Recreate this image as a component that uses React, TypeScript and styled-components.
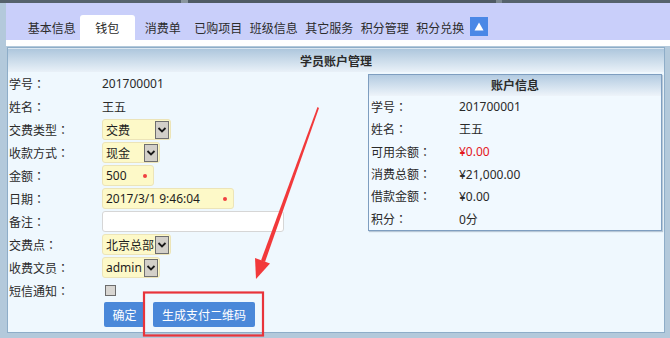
import React from "react";
import styled, { createGlobalStyle } from "styled-components";

const Global = createGlobalStyle`
  html, body { margin: 0; padding: 0; background: #b3c9db; }
  body { font-family: "Noto Sans", "Noto Sans CJK SC", sans-serif; font-size: 12px; color: #2a2a2a; }
  * { box-sizing: border-box; }
`;

const Root = styled.div`
  position: relative;
  width: 670px;
  height: 338px;
  overflow: hidden;
  background: #b3c9db;
  display: flex;
  flex-direction: column;
`;

const TopStrip = styled.div`
  height: 3px;
  background: linear-gradient(90deg, #55626c 0 27%, #8a969e 27% 28%, #4f5b64 28% 74%, #7c8890 74% 75%, #56636c 75%);
`;

const TabBar = styled.div`
  margin-left: 6px;
  height: 37px;
  background: #c9cffa;
  display: flex;
  align-items: flex-end;
  padding-left: 18px;
`;

const Tab = styled.div<{ $active?: boolean }>`
  width: 55.5px;
  height: 25px;
  display: flex;
  align-items: center;
  justify-content: center;
  font-size: 12px;
  color: #2c2c2c;
  background: ${(p) => (p.$active ? "#ffffff" : "transparent")};
  border-radius: 3px 3px 0 0;
  white-space: nowrap;
`;

const UpBox = styled.div`
  width: 18px;
  height: 19px;
  margin: 0 0 4px 2px;
  background: #4a88e6;
  display: flex;
  align-items: center;
  justify-content: center;
`;

const WhiteStrip = styled.div`
  margin-left: 6px;
  height: 6px;
  background: #ffffff;
`;

const Panel = styled.div`
  margin: 1px 5px 0 7px;
  height: 286px;
  border: 1px solid #8eadc8;
  background: #eff8fe;
  display: flex;
  flex-direction: column;
`;

const PanelHeader = styled.div`
  height: 24px;
  display: flex;
  align-items: center;
  justify-content: center;
  font-weight: bold;
  font-size: 12px;
  color: #2a2a2a;
  background: linear-gradient(#aec7dd, #e9f1f8);
  border-top: 1px solid #dbe7f1;
`;

const PanelBody = styled.div`
  flex: 1;
  display: flex;
  padding-left: 1px;
`;

const Form = styled.div`
  width: 359px;
  display: grid;
  grid-template-columns: 93px 1fr;
  grid-auto-rows: 23px;
  align-items: center;
`;

const LabelText = styled.div`
  font-size: 12px;
  color: #2a2a2a;
  white-space: nowrap;
`;

const Colon = styled.span`
  font-family: "Noto Sans CJK TC", "Noto Sans CJK SC", sans-serif;
`;

const Label = ({ children }: { children: string }) => (
  <LabelText>
    {children}
    <Colon>：</Colon>
  </LabelText>
);

const Value = styled.div`
  font-size: 12px;
  color: #2a2a2a;
  white-space: nowrap;
`;

const Field = styled.div<{ $w: number; $white?: boolean }>`
  position: relative;
  width: ${(p) => p.$w}px;
  height: 21px;
  display: flex;
  align-items: center;
  padding-left: 3px;
  font-size: 12px;
  color: #1e1e1e;
  background: ${(p) => (p.$white ? "#ffffff" : "#fdf9c8")};
  border: 1px solid ${(p) => (p.$white ? "#d6d6d6" : "#ece4b8")};
  border-radius: 3px;
  white-space: nowrap;
`;

const Star = styled.span`
  position: absolute;
  right: 6px;
  top: 8px;
  width: 4px;
  height: 4px;
  border-radius: 50%;
  background: #f04040;
`;

const DropBtn = styled.span`
  margin-left: auto;
  margin-right: 1px;
  width: 14px;
  height: 18px;
  background: #d3d0c9;
  border: 1px solid #6f6f6f;
  display: flex;
  align-items: center;
  justify-content: center;
`;

const CheckCell = styled.div`
  display: flex;
  align-items: center;
  padding-left: 3px;
`;

const Check = styled.span`
  display: block;
  width: 11px;
  height: 11px;
  border: 1px solid #6c6c6c;
  background: #d8d6d2;
`;

const ButtonRow = styled.div`
  grid-column: 2;
  height: 27px;
  display: flex;
  gap: 8px;
  padding-left: 2px;
  align-self: start;
`;

const Btn = styled.button<{ $w: number }>`
  width: ${(p) => p.$w}px;
  height: 25px;
  border: none;
  border-radius: 2px;
  background: #4a88d9;
  color: #ffffff;
  font-family: "Noto Sans CJK SC", sans-serif;
  font-size: 12px;
  padding: 0;
`;

const InfoBox = styled.div`
  margin-top: 2px;
  width: 294px;
  height: 157px;
  border: 1px solid #7e9ec0;
  background: #f1f9ff;
  box-shadow: 1px 1px 1px rgba(80, 110, 140, 0.35);
  align-self: flex-start;
  display: flex;
  flex-direction: column;
`;

const InfoHeader = styled.div`
  height: 22px;
  display: flex;
  align-items: center;
  justify-content: center;
  font-weight: bold;
  font-size: 12px;
  background: linear-gradient(#b3cbe1, #eef4fa);
`;

const InfoGrid = styled.div`
  display: grid;
  grid-template-columns: 88px 1fr;
  grid-auto-rows: 22.4px;
  align-items: center;
  padding-left: 2px;
`;

const Money = styled.div<{ $red?: boolean }>`
  font-size: 12px;
  color: ${(p) => (p.$red ? "#e4161c" : "#2a2a2a")};
`;

const Overlay = styled.svg`
  position: absolute;
  left: 0;
  top: 0;
  pointer-events: none;
`;

const Chevron = () => (
  <svg width="10" height="8" viewBox="0 0 10 8">
    <path d="M1.5 2 L5 5.5 L8.5 2" fill="none" stroke="#1a1a1a" strokeWidth="1.8" />
  </svg>
);

const tabs = ["基本信息", "钱包", "消费单", "已购项目", "班级信息", "其它服务", "积分管理", "积分兑换"];

const info: [string, string, boolean?][] = [
  ["学号", "201700001"],
  ["姓名", "王五"],
  ["可用余额", "¥0.00", true],
  ["消费总额", "¥21,000.00"],
  ["借款金额", "¥0.00"],
  ["积分", "0分"],
];

export default function App() {
  return (
    <Root>
      <Global />
      <TopStrip />
      <TabBar>
        {tabs.map((t) => (
          <Tab key={t} $active={t === "钱包"}>
            {t}
          </Tab>
        ))}
        <UpBox>
          <svg width="10" height="9" viewBox="0 0 10 9">
            <path d="M5 0.5 L9.5 8.5 L0.5 8.5 Z" fill="#ffffff" />
          </svg>
        </UpBox>
      </TabBar>
      <WhiteStrip />
      <Panel>
        <PanelHeader>学员账户管理</PanelHeader>
        <PanelBody>
          <Form>
            <Label>学号</Label>
            <Value>201700001</Value>
            <Label>姓名</Label>
            <Value>王五</Value>
            <Label>交费类型</Label>
            <Field $w={69}>
              交费
              <DropBtn>
                <Chevron />
              </DropBtn>
            </Field>
            <Label>收款方式</Label>
            <Field $w={58}>
              现金
              <DropBtn>
                <Chevron />
              </DropBtn>
            </Field>
            <Label>金额</Label>
            <Field $w={52}>
              500
              <Star />
            </Field>
            <Label>日期</Label>
            <Field $w={132}>
              2017/3/1 9:46:04
              <Star />
            </Field>
            <Label>备注</Label>
            <Field $w={182} $white />
            <Label>交费点</Label>
            <Field $w={69}>
              北京总部
              <DropBtn>
                <Chevron />
              </DropBtn>
            </Field>
            <Label>收费文员</Label>
            <Field $w={58}>
              admin
              <DropBtn>
                <Chevron />
              </DropBtn>
            </Field>
            <Label>短信通知</Label>
            <CheckCell>
              <Check />
            </CheckCell>
            <ButtonRow>
              <Btn $w={41}>确定</Btn>
              <Btn $w={102}>生成支付二维码</Btn>
            </ButtonRow>
          </Form>
          <InfoBox>
            <InfoHeader>账户信息</InfoHeader>
            <InfoGrid>
              {info.map(([l, v, red]) => (
                <React.Fragment key={l}>
                  <Label>{l}</Label>
                  <Money $red={red}>{v}</Money>
                </React.Fragment>
              ))}
            </InfoGrid>
          </InfoBox>
        </PanelBody>
      </Panel>
      <Overlay width="670" height="338" viewBox="0 0 670 338">
        <rect x="144" y="292.5" width="119" height="43" fill="none" stroke="#e8343a" strokeWidth="2.2" />
        <path d="M317.5 107 L319 108 L265 262 L261 260.5 Z" fill="#f2393b" />
        <path d="M256 279 L255 258 L270 263.5 Z" fill="#f2393b" />
      </Overlay>
    </Root>
  );
}
